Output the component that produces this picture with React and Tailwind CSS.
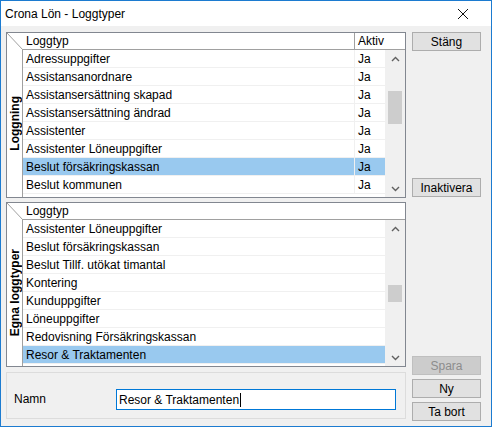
const logRows = [
  { name: "Adressuppgifter", aktiv: "Ja" },
  { name: "Assistansanordnare", aktiv: "Ja" },
  { name: "Assistansersättning skapad", aktiv: "Ja" },
  { name: "Assistansersättning ändrad", aktiv: "Ja" },
  { name: "Assistenter", aktiv: "Ja" },
  { name: "Assistenter Löneuppgifter", aktiv: "Ja" },
  { name: "Beslut försäkringskassan", aktiv: "Ja" },
  { name: "Beslut kommunen", aktiv: "Ja" },
];

const ownRows = [
  { name: "Assistenter Löneuppgifter" },
  { name: "Beslut försäkringskassan" },
  { name: "Beslut Tillf. utökat timantal" },
  { name: "Kontering" },
  { name: "Kunduppgifter" },
  { name: "Löneuppgifter" },
  { name: "Redovisning Försäkringskassan" },
  { name: "Resor & Traktamenten" },
];

function Chevron({ up }) {
  return (
    <svg width="9" height="6" viewBox="0 0 9 6" className="block">
      <path
        d={up ? "M1 5 L4.5 1.5 L8 5" : "M1 1 L4.5 4.5 L8 1"}
        fill="none"
        stroke="#606060"
        strokeWidth="1.4"
      />
    </svg>
  );
}

function Grid({ label, rows, selected, aktiv, height, thumbTop, thumbHeight }) {
  return (
    <div
      className="w-[400px] border border-[#828790] bg-white flex flex-col"
      style={{ height }}
    >
      {/* header */}
      <div className="flex h-[17px] shrink-0">
        <div className="w-[16px] h-[17px] relative">
          <svg width="16" height="17" className="absolute inset-0">
            <line x1="0" y1="0" x2="16" y2="17" stroke="#a0a0a0" strokeWidth="1" />
          </svg>
        </div>
        <div className="flex-1 flex border-b border-[#a0a0a0]">
          <div className="flex-1 pl-[3px] leading-[16px]">Loggtyp</div>
          {aktiv && (
            <div className="w-[51px] border-l border-[#a0a0a0] pl-[3px] leading-[16px]">Aktiv</div>
          )}
        </div>
      </div>

      {/* body */}
      <div className="flex flex-1 min-h-0">
        <div className="w-[16px] border-r border-[#a0a0a0] flex items-center justify-center">
          <span className="font-bold [writing-mode:vertical-rl] rotate-180 whitespace-nowrap leading-[14px]">
            {label}
          </span>
        </div>
        <div className="w-[362px] flex flex-col">
          {rows.map((r, i) => (
            <div
              key={r.name}
              className={
                "flex h-[18px] border-b border-[#f0f0f0] " +
                (i === selected ? "bg-[#99c9ef]" : "")
              }
            >
              <div className="flex-1 pl-[3px] pt-[1px] leading-[16px] whitespace-nowrap">{r.name}</div>
              {aktiv && (
                <div className="w-[31px] border-l border-[#f0f0f0] pl-[3px] pt-[1px] leading-[16px]">
                  {r.aktiv}
                </div>
              )}
            </div>
          ))}
        </div>
        <div className="w-[20px] bg-[#f0f0f0] flex flex-col items-center relative">
          <div className="h-[17px] flex items-center justify-center">
            <Chevron up />
          </div>
          <div className="flex-1" />
          <div className="h-[17px] flex items-center justify-center">
            <Chevron />
          </div>
          <div
            className="absolute left-[3px] w-[14px] bg-[#cdcdcd]"
            style={{ top: thumbTop, height: thumbHeight }}
          />
        </div>
      </div>
    </div>
  );
}

function Button({ children, disabled, className = "" }) {
  return (
    <div
      className={
        "w-[69px] h-[19px] border flex items-center justify-center leading-none " +
        (disabled
          ? "bg-[#cccccc] border-[#bfbfbf] text-[#8d8d8d] "
          : "bg-[#e1e1e1] border-[#adadad] text-black ") +
        className
      }
    >
      {children}
    </div>
  );
}

export default function App() {
  return (
    <div className="w-[492px] h-[427px] border border-[#1c7bd0] bg-[#f0f0f0] flex flex-col font-['Liberation_Sans',Arial,sans-serif] text-[12px] text-black overflow-hidden">
      {/* title bar */}
      <div className="h-[25px] bg-white flex items-center justify-between shrink-0">
        <span className="pl-[4px] text-[12px]">Crona Lön - Loggtyper</span>
        <svg width="12" height="12" viewBox="0 0 12 12" className="mr-[22px]">
          <path d="M1 1 L11 11 M11 1 L1 11" stroke="#111" strokeWidth="1" />
        </svg>
      </div>

      {/* body */}
      <div className="flex flex-1 pl-[5px] pt-[6px]">
        <div className="flex flex-col">
          <Grid
            label="Loggning"
            rows={logRows}
            selected={6}
            aktiv
            height={166}
            thumbTop={41}
            thumbHeight={33}
          />
          <div className="mt-[4px]">
            <Grid
              label="Egna loggtyper"
              rows={ownRows}
              selected={7}
              height={165}
              thumbTop={65}
              thumbHeight={17}
            />
          </div>
          <div className="mt-[5px] w-[400px] h-[47px] border border-[#dcdcdc] flex items-start pt-[16px]">
            <span className="w-[109px] pl-[7px] leading-[21px]">Namn</span>
            <div className="w-[280px] h-[21px] border border-[#0078d7] bg-white flex items-center pl-[2px]">
              <span className="whitespace-nowrap">Resor &amp; Traktamenten</span>
              <span className="w-[1px] h-[14px] bg-black ml-[1px]" />
            </div>
          </div>
        </div>

        <div className="flex flex-col ml-[6px]">
          <Button>Stäng</Button>
          <Button className="mt-[127px]">Inaktivera</Button>
          <Button disabled className="mt-[159px]">Spara</Button>
          <Button className="mt-[4px]">Ny</Button>
          <Button className="mt-[4px]">Ta bort</Button>
        </div>
      </div>
    </div>
  );
}
